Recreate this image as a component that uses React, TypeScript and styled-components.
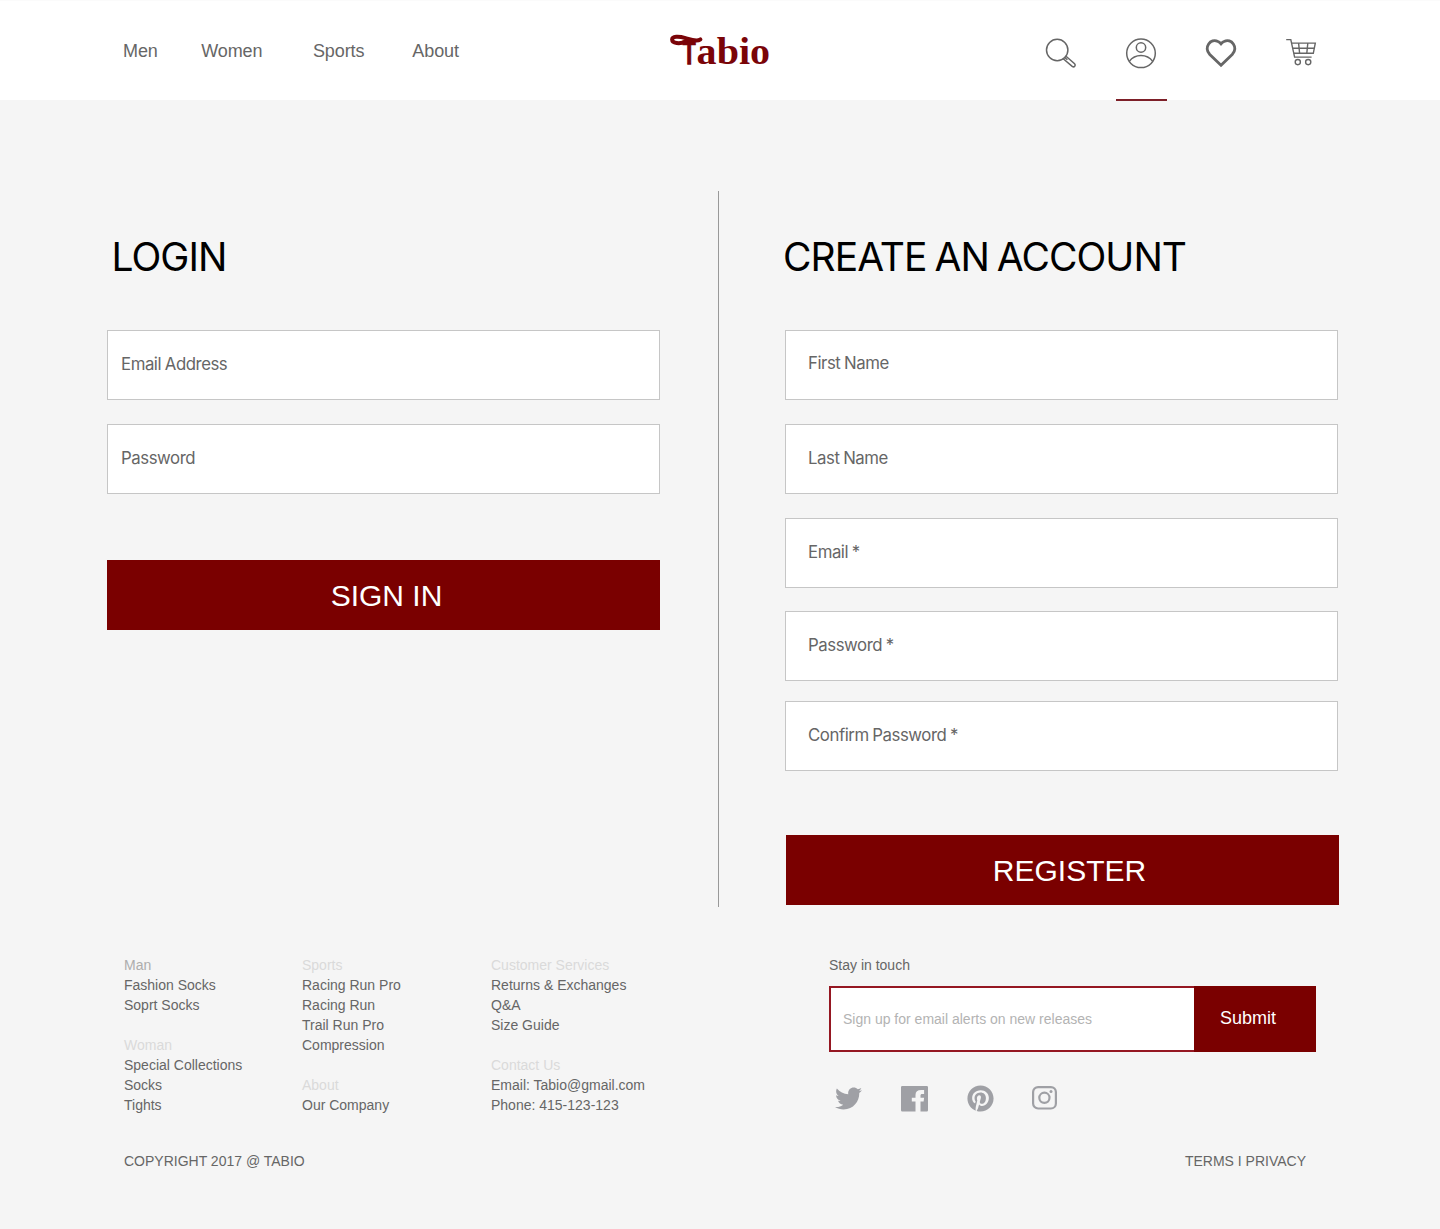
import React from "react";
import styled, { createGlobalStyle } from "styled-components";
import { FaTwitter, FaPinterest } from "react-icons/fa";

const GlobalStyle = createGlobalStyle`
  * {
    box-sizing: border-box;
  }
  body {
    margin: 0;
    background: #f5f5f5;
    font-family: "Liberation Sans", Arial, sans-serif;
    color: #666;
  }
  a {
    color: inherit;
    text-decoration: none;
  }
`;

const Page = styled.div`
  width: 1440px;
  height: 1229px;
  overflow: hidden;
`;

const Header = styled.header`
  display: flex;
  height: 100px;
  padding-left: 123px;
  background: #fff;
  border-top: 1px solid #fbfbfb;
`;

const Navigation = styled.nav`
  display: flex;
  width: 545px;
  padding-top: 39px;
  font-size: 18px;
  line-height: 22px;
`;

const NavItem = styled.a<{ gap?: number }>`
  margin-left: ${({ gap }) => gap ?? 0}px;
  letter-spacing: -0.1px;
`;

const LogoLink = styled.a`
  width: 368px;
  padding-top: 29px;
`;

const IconBar = styled.div`
  display: flex;
  gap: 29px;
`;

const IconButton = styled.a<{ active?: boolean }>`
  position: relative;
  width: 51px;
  height: 99px;
  padding: 33px 0 0 6px;

  &::after {
    content: "";
    display: ${({ active }) => (active ? "block" : "none")};
    position: absolute;
    left: 0;
    bottom: -1px;
    width: 51px;
    height: 2px;
    background: #7d1f28;
  }
`;

const Main = styled.main`
  display: flex;
  height: 807px;
  padding: 91px 0 0 107px;
`;

const Column = styled.section`
  width: 553px;
  padding-top: 40px;
`;

const Divider = styled.div`
  width: 1px;
  height: 716px;
  margin: 0 66px 0 58px;
  background: #999;
`;

const Title = styled.h1<{ indent: number }>`
  height: 52px;
  margin: 0 0 47px ${({ indent }) => indent}px;
  font-family: Inter, sans-serif;
  font-size: 39px;
  font-weight: 400;
  line-height: 52px;
  letter-spacing: -0.95px;
  word-spacing: -2.1px;
  color: #000;
  white-space: nowrap;
`;

const Field = styled.div<{ indent: number; gap?: number; lift?: number }>`
  height: 70px;
  margin-bottom: ${({ gap }) => gap ?? 24}px;
  padding-left: ${({ indent }) => indent}px;
  padding-top: ${({ lift }) => 21 - (lift ?? 0)}px;
  border: 1px solid #c6c6c6;
  background: #fff;
  font-family: Inter, sans-serif;
  font-size: 16.8px;
  line-height: 24px;
  letter-spacing: -0.45px;
  word-spacing: -0.6px;
`;

const MainButton = styled.button<{ top: number; shift?: number; nudge: number }>`
  display: block;
  width: 553px;
  height: 70px;
  margin: ${({ top }) => top}px 0 0 ${({ shift }) => shift ?? 0}px;
  padding: 2px 0 0 ${({ nudge }) => nudge * 2}px;
  border: 0;
  background: #7a0000;
  color: #fff;
  font-family: inherit;
  font-size: 30px;
  line-height: 34px;
`;

const Footer = styled.footer`
  padding: 48px 124px 0;
  font-size: 14px;
  line-height: 20px;
`;

const FooterTop = styled.div`
  display: flex;
  height: 196px;
`;

const FooterColumn = styled.div<{ width: number }>`
  width: ${({ width }) => width}px;
`;

const LinkGroup = styled.div`
  display: flex;
  flex-direction: column;
  margin-bottom: 20px;
  white-space: nowrap;
`;

const GroupTitle = styled.span<{ tone?: string }>`
  color: ${({ tone }) => tone ?? "#dadada"};
`;

const Subscribe = styled.div`
  width: 487px;
`;

const SubscribeForm = styled.div`
  display: flex;
  height: 66px;
  margin-top: 11px;
`;

const EmailBox = styled.div`
  width: 365px;
  padding: 21px 0 0 12px;
  border: 2px solid #951722;
  border-right: 0;
  background: #fff;
  color: #b3b3b3;
`;

const SubmitButton = styled.button`
  width: 122px;
  padding: 0 14px 2px 0;
  border: 0;
  background: #7a0000;
  color: #fff;
  font-family: inherit;
  font-size: 18px;
`;

const Social = styled.div`
  display: flex;
  align-items: flex-start;
  padding: 33px 0 0 6px;
  color: #9fa0a5;
`;

const SocialLink = styled.a<{ width: number; top?: number }>`
  display: flex;
  width: ${({ width }) => width}px;
  padding-top: ${({ top }) => top ?? 0}px;
`;

const FooterBottom = styled.div`
  display: flex;
  justify-content: space-between;
  padding-right: 10px;
`;

const Logo: React.FC = () => (
  <svg width="106" height="42" viewBox="0 0 106 42" fill="#7a0408">
    <text transform="translate(14.8 33.6) scale(0.64 1)" fontFamily="Liberation Sans" fontWeight="700" fontSize="33" stroke="#7a0408" strokeWidth="1.3">T</text>
    <text transform="translate(28.6 34) scale(1.055 1)" fontFamily="Liberation Serif" fontWeight="700" fontSize="38">abio</text>
    <path
      d="M32.4 9.4C29 12 23.5 9.9 17.5 8.1C10.5 6 4.2 6.2 4.1 9.5C4.2 13.4 11.5 14.2 18 11.6"
      fill="none"
      stroke="#7a0408"
      strokeWidth="4"
      strokeLinecap="round"
    />
  </svg>
);

const SearchIcon: React.FC = () => (
  <svg width="40" height="40" viewBox="0 0 40 40" fill="none" stroke="#666" strokeWidth="1.5">
    <circle cx="15.2" cy="16" r="10.7" />
    <path d="M21.2 24.8L30.2 32.4C32.2 33.8 34.2 31.6 32.6 29.7L24 22.2" />
    <path d="M22.4 23.2L25.4 25.8" />
  </svg>
);

const UserIcon: React.FC = () => (
  <svg width="40" height="40" viewBox="0 0 40 40" fill="none" stroke="#666" strokeWidth="1.5">
    <circle cx="19" cy="19.3" r="14.3" />
    <circle cx="19" cy="13.5" r="4.7" />
    <path d="M7.3 27.4C13 19.6 25 19.6 30.7 27.4" />
  </svg>
);

const HeartIcon: React.FC = () => (
  <svg width="40" height="40" viewBox="0 0 40 40" fill="none" stroke="#666" strokeWidth="2.8">
    <path d="M19 31.2L7.8 20.5C1.4 13.3 8.4 3.8 16 7.5C17.4 8.1 18.4 9.1 19 9.8C19.6 9.1 20.6 8.1 22 7.5C29.6 3.8 36.6 13.3 30.2 20.5Z" />
  </svg>
);

const CartIcon: React.FC = () => (
  <svg width="40" height="40" viewBox="0 0 40 40" fill="none" stroke="#666" strokeWidth="1.4">
    <path d="M4.2 5.6H8.8L12.6 23.1H29.6" />
    <path d="M9.6 9.1H33.3L31.3 19.3H11.8" />
    <path d="M10.8 14.2H32.3M16.6 9.1L17.6 19.3M25.8 9.1L24.8 19.3" />
    <circle cx="15.8" cy="28.1" r="2.6" />
    <circle cx="26.2" cy="28.1" r="2.6" />
  </svg>
);

const FacebookIcon: React.FC = () => (
  <svg width="27" height="26" viewBox="0 0 27 26" fill="currentColor">
    <path d="M1.2 0H25.8Q27 0 27 1.2V24.3Q27 25.5 25.8 25.5H19.5V15.6H22.6L23.1 11.7H19.5V9.6C19.5 8.5 20 8 21.2 8H23.1V4H20.2C16.4 4 14.5 5.8 14.5 9V11.7H10.8V15.6H14.5V25.5H1.2Q0 25.5 0 24.3V1.2Q0 0 1.2 0Z" />
  </svg>
);

const InstagramIcon: React.FC = () => (
  <svg width="25" height="24" viewBox="0 0 25 24" fill="none" stroke="currentColor" strokeWidth="2.2">
    <rect x="1.1" y="1.1" width="22.8" height="21.4" rx="5" />
    <circle cx="12.4" cy="11.8" r="5.1" />
    <circle cx="19" cy="5.6" r="1.5" fill="currentColor" stroke="none" />
  </svg>
);

const App: React.FC = () => {
  return (
    <Page>
      <GlobalStyle />
      <Header>
        <Navigation>
          <NavItem>Men</NavItem>
          <NavItem gap={43.5}>Women</NavItem>
          <NavItem gap={50.5}>Sports</NavItem>
          <NavItem gap={48}>About</NavItem>
        </Navigation>
        <LogoLink><Logo /></LogoLink>
        <IconBar>
          <IconButton><SearchIcon /></IconButton>
          <IconButton active><UserIcon /></IconButton>
          <IconButton><HeartIcon /></IconButton>
          <IconButton><CartIcon /></IconButton>
        </IconBar>
      </Header>

      <Main>
        <Column>
          <Title indent={4.5}>LOGIN</Title>
          <Field indent={13}>Email Address</Field>
          <Field indent={13}>Password</Field>
          <MainButton top={66} nudge={3}>SIGN IN</MainButton>
        </Column>
        <Divider />
        <Column>
          <Title indent={-2}>CREATE AN ACCOUNT</Title>
          <Field indent={22} lift={1}>First Name</Field>
          <Field indent={22}>Last Name</Field>
          <Field indent={22} gap={23}>Email *</Field>
          <Field indent={22} gap={20}>Password *</Field>
          <Field indent={22} gap={0}>Confirm Password *</Field>
          <MainButton top={64} shift={1} nudge={7}>REGISTER</MainButton>
        </Column>
      </Main>

      <Footer>
        <FooterTop>
          <FooterColumn width={178}>
            <LinkGroup>
              <GroupTitle tone="#adadad">Man</GroupTitle>
              <a>Fashion Socks</a>
              <a>Soprt Socks</a>
            </LinkGroup>
            <LinkGroup>
              <GroupTitle>Woman</GroupTitle>
              <a>Special Collections</a>
              <a>Socks</a>
              <a>Tights</a>
            </LinkGroup>
          </FooterColumn>
          <FooterColumn width={189}>
            <LinkGroup>
              <GroupTitle>Sports</GroupTitle>
              <a>Racing Run Pro</a>
              <a>Racing Run</a>
              <a>Trail Run Pro</a>
              <a>Compression</a>
            </LinkGroup>
            <LinkGroup>
              <GroupTitle>About</GroupTitle>
              <a>Our Company</a>
            </LinkGroup>
          </FooterColumn>
          <FooterColumn width={338}>
            <LinkGroup>
              <GroupTitle>Customer Services</GroupTitle>
              <a>Returns &amp; Exchanges</a>
              <a>Q&amp;A</a>
              <a>Size Guide</a>
            </LinkGroup>
            <LinkGroup>
              <GroupTitle>Contact Us</GroupTitle>
              <span>Email: Tabio@gmail.com</span>
              <span>Phone: 415-123-123</span>
            </LinkGroup>
          </FooterColumn>
          <Subscribe>
            Stay in touch
            <SubscribeForm>
              <EmailBox>Sign up for email alerts on new releases</EmailBox>
              <SubmitButton>Submit</SubmitButton>
            </SubscribeForm>
            <Social>
              <SocialLink width={66}><FaTwitter size={27} /></SocialLink>
              <SocialLink width={66} top={1}><FacebookIcon /></SocialLink>
              <SocialLink width={65}><FaPinterest size={27} /></SocialLink>
              <SocialLink width={25} top={1}><InstagramIcon /></SocialLink>
            </Social>
          </Subscribe>
        </FooterTop>
        <FooterBottom>
          <span>COPYRIGHT 2017 @ TABIO</span>
          <span>TERMS I PRIVACY</span>
        </FooterBottom>
      </Footer>
    </Page>
  );
};

export default App;
